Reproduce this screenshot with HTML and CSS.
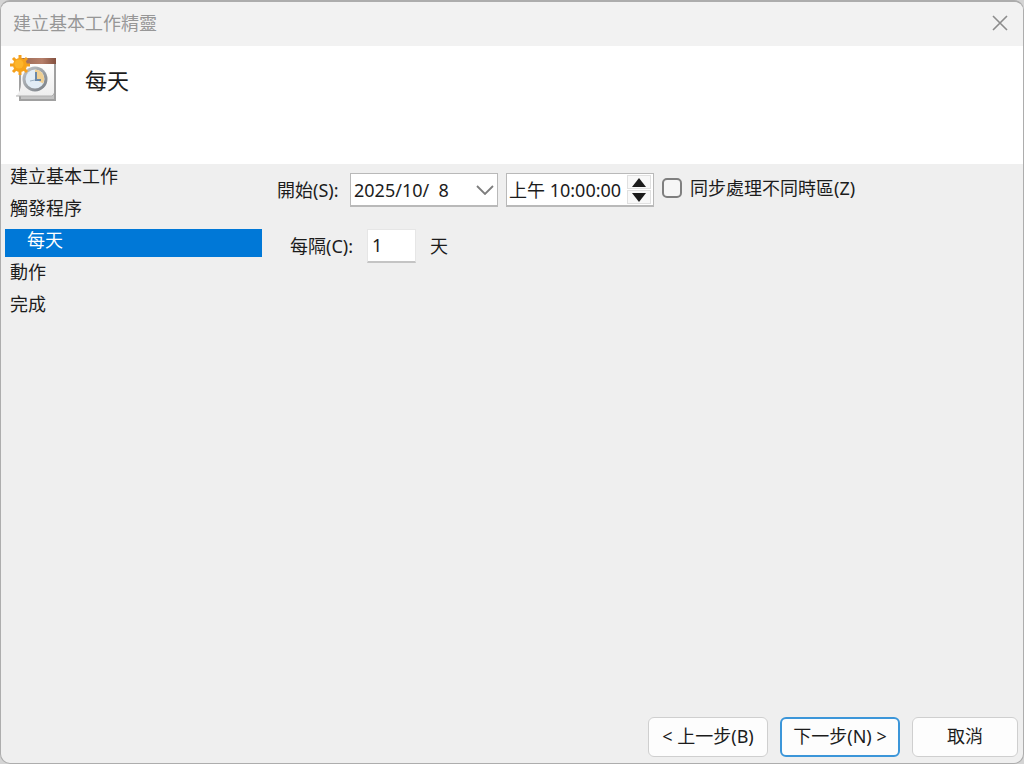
FILE: index.html
```html
<!DOCTYPE html>
<html lang="zh-Hant">
<head>
  <meta charset="UTF-8">
  <meta name="viewport" content="width=device-width, initial-scale=1.0">
  <title>建立基本工作精靈</title>
  <link rel="stylesheet" href="styles.css">
</head>
<body>
  <div class="window">
    <header class="titlebar">
      <span class="title">建立基本工作精靈</span>
      <button type="button" class="close" aria-label="關閉">
        <svg width="16" height="16" viewBox="0 0 16 16"><path d="M1 1l14 14M15 1L1 15" fill="none" stroke="#8c8c8c" stroke-width="1.6"/></svg>
      </button>
    </header>

    <section class="banner">
      <svg class="task-icon" width="48" height="48" viewBox="0 0 48 48">
        <defs>
          <linearGradient id="top" x1="0" x2="1"><stop offset="0" stop-color="#9a6a58"/><stop offset=".6" stop-color="#b67f6a"/><stop offset="1" stop-color="#83503f"/></linearGradient>
          <linearGradient id="paper" x1="0" y1="0" x2="0" y2="1"><stop offset="0" stop-color="#ffffff"/><stop offset="1" stop-color="#eeeeee"/></linearGradient>
          <linearGradient id="rim" x1="0" y1="0" x2="1" y2="1"><stop offset="0" stop-color="#c2c6ca"/><stop offset="1" stop-color="#777d83"/></linearGradient>
        </defs>
        <path d="M10 6h37v41H10z" fill="#a0a0a0"/>
        <path d="M12 40h33v5H12z" fill="#c4c4c4"/>
        <path d="M12 8h33v31l-2 3H7q5-5 5-12z" fill="url(#paper)"/>
        <path d="M7 42h36l2-2" fill="none" stroke="#b0b0b0"/>
        <path d="M12 4h35v6H12z" fill="url(#top)"/>
        <circle cx="26" cy="25" r="12.5" fill="url(#rim)"/>
        <circle cx="26" cy="25" r="9.5" fill="#e2edf6"/>
        <path d="M26 25v-9.500a9.500 9.500 0 0 1 8 14z" fill="#efcf92"/>
        <path d="M27 18v8h5" fill="none" stroke="#6b88a6" stroke-width="2"/>
        <path d="M26 26l-5 1" stroke="#9cb0c2"/>
        <g stroke="#f5a01c" stroke-width="3">
          <path d="M11 1v20M1 11h20M4 4l14 14M18 4L4 18"/>
        </g>
        <circle cx="11" cy="11" r="7" fill="#f6a31a"/>
        <circle cx="10" cy="10" r="4.500" fill="#fdb52a"/>
      </svg>
      <h1>每天</h1>
    </section>

    <main>
      <nav class="steps">
        <a href="#task">建立基本工作</a>
        <a href="#trigger">觸發程序</a>
        <a href="#daily" class="sub active" aria-current="step">每天</a>
        <a href="#action">動作</a>
        <a href="#finish">完成</a>
      </nav>

      <form class="settings" id="daily">
        <div class="row">
          <label class="start-label" for="start-date">開始(S):</label>
          <div class="box date">
            <select id="start-date">
              <option>2025/10/&nbsp; 8</option>
            </select>
            <svg class="chevron" width="18" height="10" viewBox="0 0 18 10"><path d="M1 1l8 8 8-8" fill="none" stroke="#7d7d7d" stroke-width="1.8"/></svg>
          </div>
          <div class="box time">
            <input type="text" value="上午 10:00:00" aria-label="開始時間">
            <div class="spin">
              <button type="button" aria-label="增加"><svg width="14" height="9" viewBox="0 0 14 9"><path d="M7 0l7 9H0z" fill="#1b1b1b"/></svg></button>
              <button type="button" aria-label="減少"><svg width="14" height="9" viewBox="0 0 14 9"><path d="M0 0h14L7 9z" fill="#1b1b1b"/></svg></button>
            </div>
          </div>
          <label class="sync"><input type="checkbox">同步處理不同時區(Z)</label>
        </div>

        <div class="row interval">
          <label for="every">每隔(C):</label>
          <input type="text" id="every" value="1">
          <span>天</span>
        </div>
      </form>
    </main>

    <footer>
      <button type="button">&lt; 上一步(B)</button>
      <button type="button" class="default">下一步(N) &gt;</button>
      <button type="button" class="cancel">取消</button>
    </footer>
  </div>
</body>
</html>
```
FILE: styles.css
```css
* {
  box-sizing: border-box;
}
body {
  margin: 0;
  background: #d4d4d4;
  color: #1c1c1c;
}
body, button, input, select {
  font-family: "Noto Sans", "Noto Sans CJK TC", sans-serif;
  font-size: 18px;
  line-height: 24px;
}
button, input, select {
  color: inherit;
  margin: 0;
}
.window {
  display: flex;
  flex-direction: column;
  min-height: 100vh;
  background: #efefef;
  border: 1px solid #adadad;
  border-top-width: 2px;
  border-radius: 10px;
  overflow: hidden;
}
.titlebar {
  display: flex;
  align-items: center;
  justify-content: space-between;
  height: 44px;
  padding: 0 12px 2px;
  background: #f2f2f2;
  color: #979797;
}
.close {
  display: flex;
  padding: 3px;
  border: none;
  background: none;
}
.banner {
  display: flex;
  align-items: flex-start;
  gap: 28px;
  height: 118px;
  padding: 8px;
  background: white;
}
.banner h1 {
  margin: 10px 0 0;
  font-size: 22px;
  font-weight: normal;
  line-height: 32px;
}
main {
  display: flex;
  flex: 1;
}
.steps {
  display: flex;
  flex-direction: column;
  gap: 4px;
  width: 261px;
  padding: 1px 0 0 4px;
}
.steps a {
  height: 28px;
  padding-left: 5px;
  color: inherit;
  line-height: 22px;
  text-decoration: none;
}
.steps .sub {
  padding-left: 22px;
}
.steps .active {
  background: #0078d7;
  color: white;
}
.settings {
  padding: 9px 0 0 15px;
}
.row {
  display: flex;
  align-items: center;
}
.start-label {
  width: 73px;
}
.box {
  display: flex;
  align-items: center;
  width: 148px;
  height: 34px;
  margin-right: 8px;
  background: white;
  border: 1px solid #b9b9b9;
  border-bottom-width: 2px;
}
.date {
  position: relative;
}
.date select {
  appearance: none;
  width: 100%;
  height: 31px;
  padding: 0 3px;
  border: none;
  background: none;
}
.chevron {
  position: absolute;
  right: 3px;
  pointer-events: none;
}
.time input {
  flex: 1;
  width: 0;
  padding: 0 0 0 2px;
  border: none;
  background: none;
}
.spin {
  display: flex;
  flex-direction: column;
  gap: 1px;
  width: 24px;
  margin-right: 2px;
}
.spin button {
  display: flex;
  align-items: center;
  justify-content: center;
  height: 14px;
  padding: 0;
  border: 1px solid #e0e0e0;
  background: #f8f8f8;
}
.sync {
  display: flex;
  align-items: center;
  gap: 8px;
  margin-bottom: 4px;
}
.sync input {
  appearance: none;
  width: 20px;
  height: 20px;
  background: #f6f6f6;
  border: 2px solid #7f7f7f;
  border-radius: 5px;
}
.sync input:checked {
  background: #0078d7;
}
.interval {
  gap: 14px;
  margin: 22px 0 0 13px;
}
.interval input {
  width: 49px;
  height: 34px;
  padding: 0 4px 2px;
  background: white;
  border: 1px solid #e6e6e6;
  border-bottom: 2px solid #c4c4c4;
}
footer {
  display: flex;
  justify-content: flex-end;
  gap: 12px;
  padding: 6px 5px;
}
footer button {
  width: 120px;
  height: 40px;
  padding: 0 0 2px;
  background: #fdfdfd;
  border: 1px solid #cfcfcf;
  border-radius: 6px;
}
footer .default {
  border: 2px solid #3c96d9;
}
footer .cancel {
  width: 106px;
}
```
